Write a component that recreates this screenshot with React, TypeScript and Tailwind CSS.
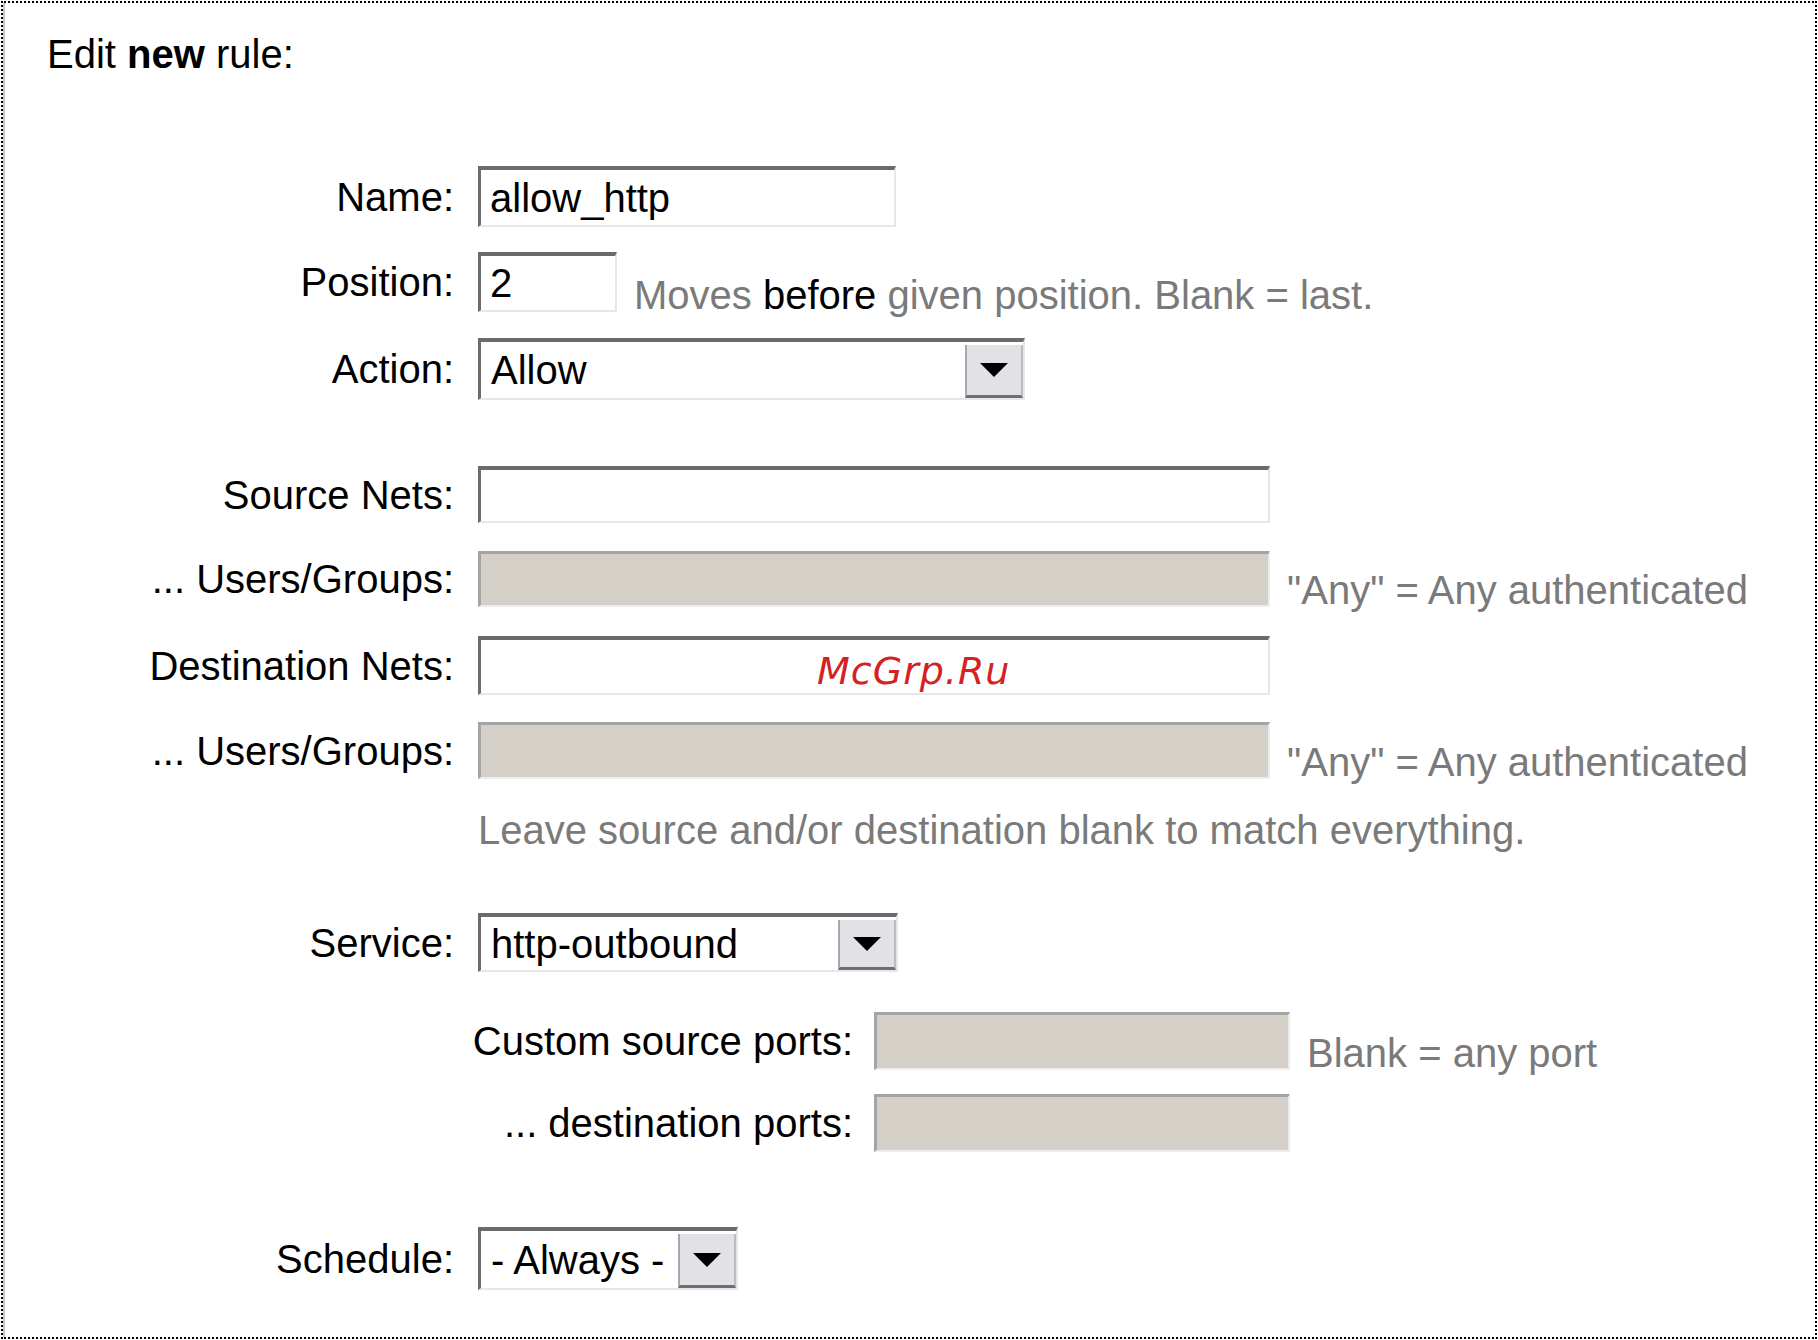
import React from "react";

const sunken =
  "border-t-[4px] border-l-[3px] border-r-[2px] border-b-[2px] border-t-[#6b6b6b] border-l-[#6b6b6b] border-r-[#e6e6ec] border-b-[#e6e6ec] bg-white";
const disabledBox =
  "border-t-[3px] border-l-[3px] border-r-[2px] border-b-[2px] border-t-[#a4a4a4] border-l-[#a4a4a4] border-r-[#ececf0] border-b-[#ececf0] bg-[#d4d0c8]";

const Triangle = () => (
  <svg width="28" height="14" viewBox="0 0 28 14">
    <polygon points="0,0 28,0 14,14" fill="#000" />
  </svg>
);

function Select({ value, className }: { value: string; className: string }) {
  return (
    <div className={`flex pt-[3px] ${sunken} ${className}`}>
      <div className="flex flex-1 items-center pl-[10px] pb-[3px] whitespace-nowrap">{value}</div>
      <div className="flex w-[58px] items-center justify-center bg-[#e2e2e6] border-l-2 border-r-2 border-l-[#a8a8ac] border-r-[#bcbcc0] border-b-[3px] border-b-[#6e6e6e]">
        <Triangle />
      </div>
    </div>
  );
}

interface RowProps {
  label: string;
  mt: string;
  children: React.ReactNode;
}

function Row({ label, mt, children }: RowProps) {
  return (
    <div className={`flex items-center ${mt}`}>
      <div className="w-[449px] shrink-0 text-right whitespace-nowrap">{label}</div>
      <div className="ml-[24px] flex items-center">{children}</div>
    </div>
  );
}

function PortRow({ label, mt, children }: RowProps) {
  return (
    <div className={`flex items-center ${mt}`}>
      <div className="w-[848px] shrink-0 text-right whitespace-nowrap">{label}</div>
      <div className="ml-[21px] flex items-center">{children}</div>
    </div>
  );
}

const Hint = ({ children }: { children: React.ReactNode }) => (
  <span className="ml-[17px] self-end mb-[-6px] whitespace-nowrap text-[#7a7a7a]">{children}</span>
);

export default function App() {
  return (
    <div className="w-[1818px] h-[1340px] bg-white p-[1px] font-['Liberation_Sans',Arial,sans-serif] text-[40px] leading-[46px] text-black">
      <div className="h-[1338px] border-2 border-dotted border-black">
        <div className="h-full border-l-2 border-l-[#c4c4c4] pt-[28px]">
          <div className="pl-[42px]">
            Edit <span className="font-bold">new</span> rule:
          </div>

          <Row label="Name:" mt="mt-[89px]">
            <div className={`flex h-[61px] w-[418px] items-center pl-[9px] ${sunken}`}>allow_http</div>
          </Row>

          <Row label="Position:" mt="mt-[25px]">
            <div className={`flex h-[60px] w-[139px] items-center pl-[9px] ${sunken}`}>2</div>
            <Hint>
              Moves <span className="text-black">before</span> given position. Blank = last.
            </Hint>
          </Row>

          <Row label="Action:" mt="mt-[26px]">
            <Select value="Allow" className="h-[62px] w-[547px]" />
          </Row>

          <Row label="Source Nets:" mt="mt-[66px]">
            <div className={`h-[57px] w-[792px] ${sunken}`} />
          </Row>

          <Row label="... Users/Groups:" mt="mt-[28px]">
            <div className={`h-[56px] w-[792px] ${disabledBox}`} />
            <Hint>"Any" = Any authenticated</Hint>
          </Row>

          <Row label="Destination Nets:" mt="mt-[29px]">
            <div className={`relative h-[59px] w-[792px] ${sunken}`}>
              <span className="absolute left-[336px] top-[9px] font-['DejaVu_Sans',sans-serif] text-[38px] leading-[44px] italic tracking-[1px] text-[#d42222]">
                McGrp.Ru
              </span>
            </div>
          </Row>

          <Row label="... Users/Groups:" mt="mt-[27px]">
            <div className={`h-[57px] w-[792px] ${disabledBox}`} />
            <Hint>"Any" = Any authenticated</Hint>
          </Row>

          <div className="mt-[28px] pl-[473px] whitespace-nowrap text-[#7a7a7a]">
            Leave source and/or destination blank to match everything.
          </div>

          <Row label="Service:" mt="mt-[60px]">
            <Select value="http-outbound" className="h-[59px] w-[420px]" />
          </Row>

          <PortRow label="Custom source ports:" mt="mt-[40px]">
            <div className={`h-[58px] w-[416px] ${disabledBox}`} />
            <Hint>Blank = any port</Hint>
          </PortRow>

          <PortRow label="... destination ports:" mt="mt-[24px]">
            <div className={`h-[58px] w-[416px] ${disabledBox}`} />
          </PortRow>

          <Row label="Schedule:" mt="mt-[75px]">
            <Select value="- Always -" className="h-[63px] w-[260px]" />
          </Row>
        </div>
      </div>
    </div>
  );
}
